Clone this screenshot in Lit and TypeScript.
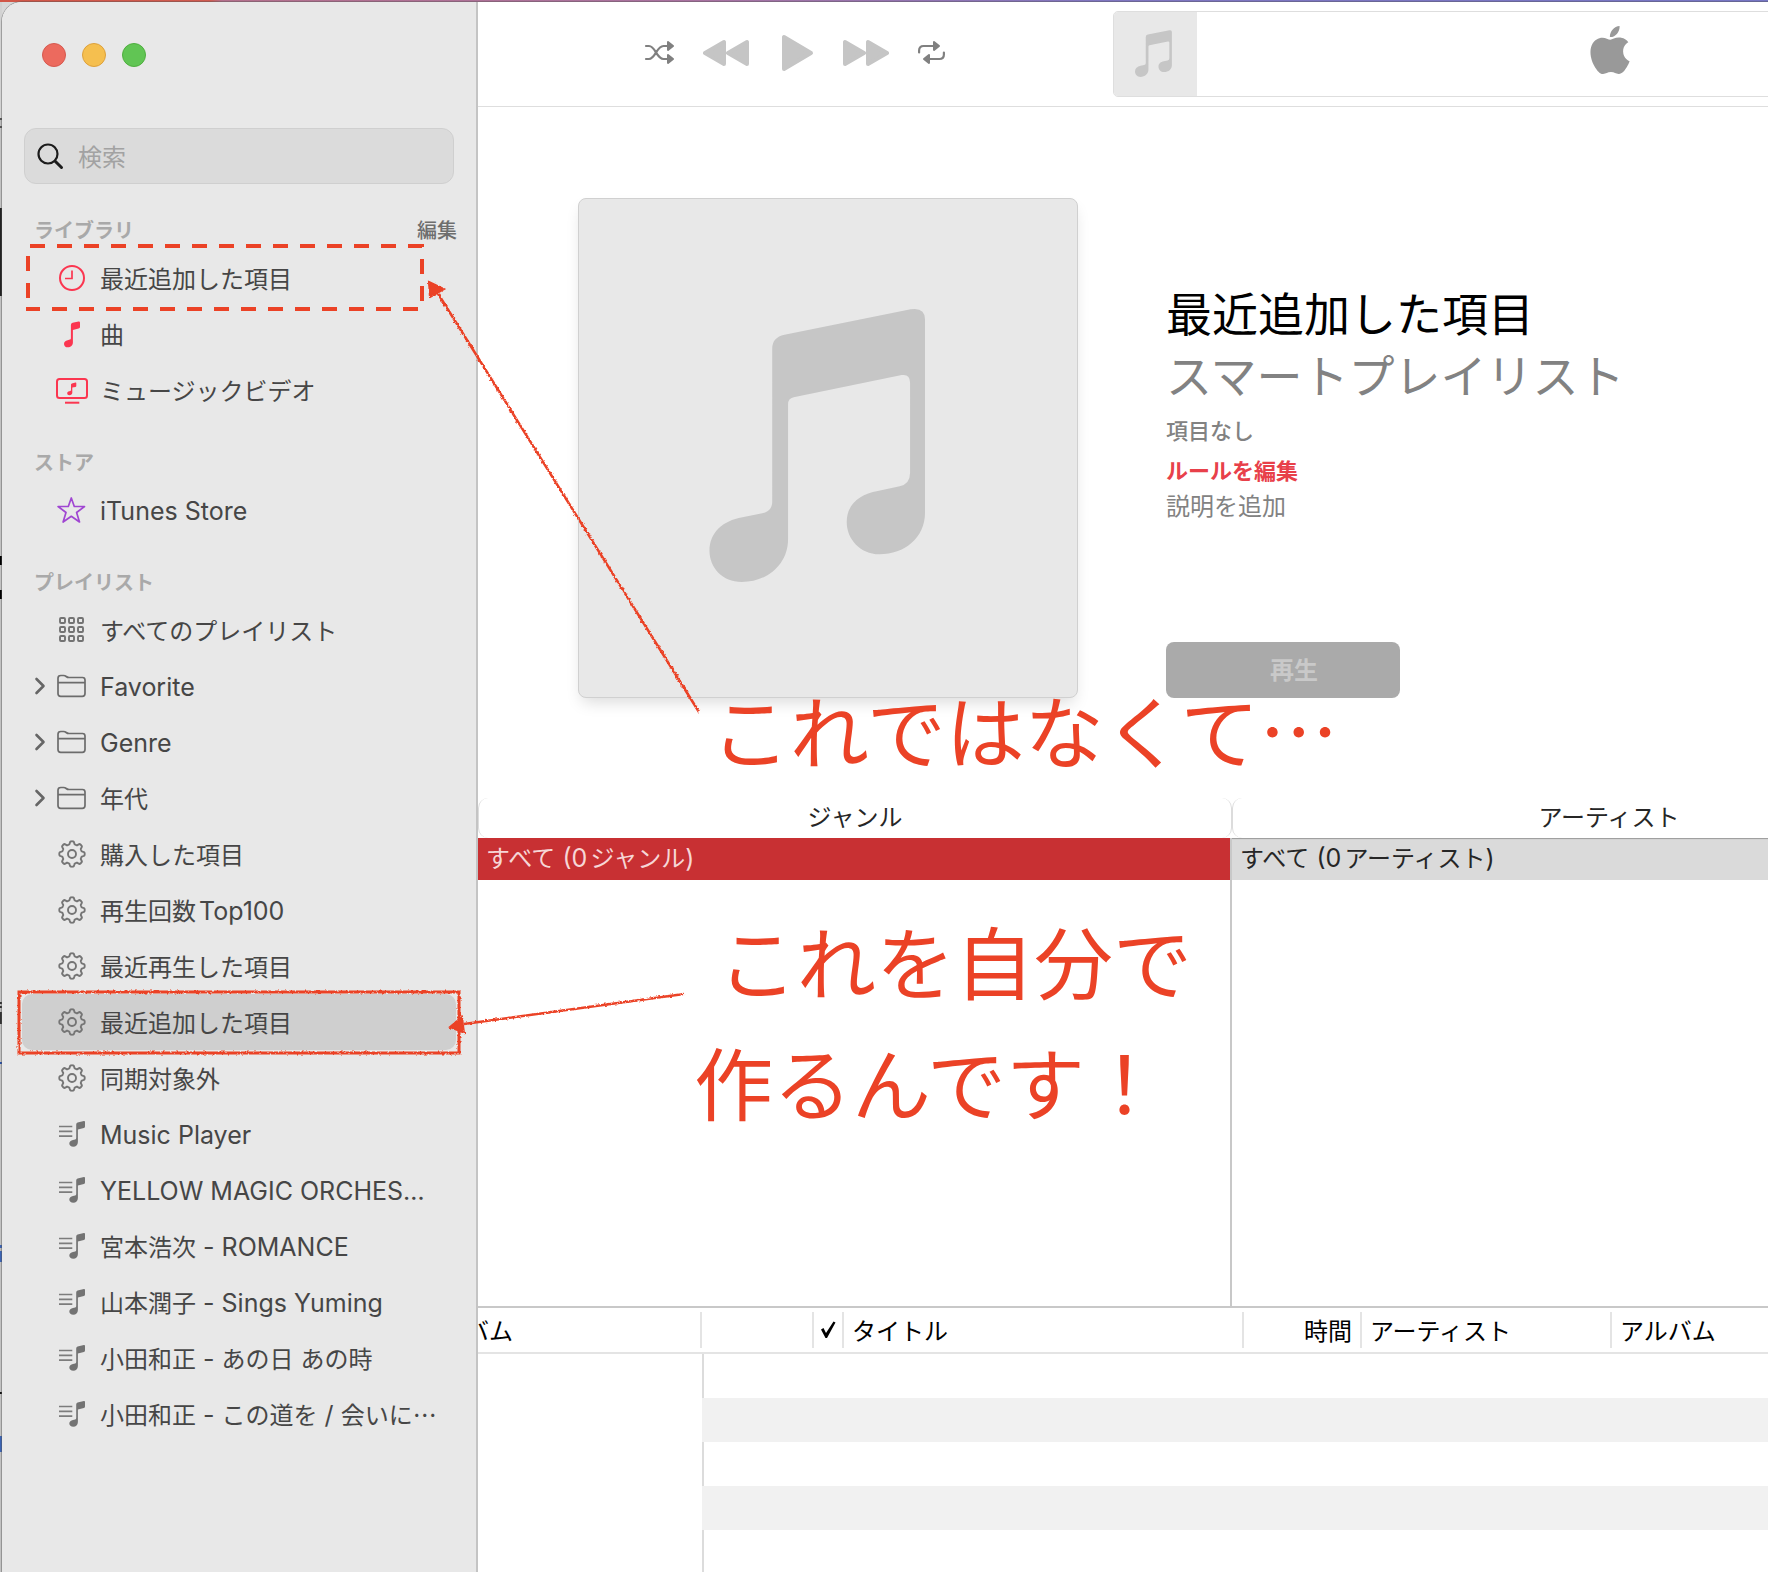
import { LitElement, html, css, svg, nothing } from "lit";
import { customElement, property, state } from "lit/decorators.js";
import { classMap } from "lit/directives/class-map.js";

type IconName = "clock" | "note" | "video" | "star" | "grid" | "folder" | "gear" | "playlist";

interface Item {
  id: string;
  label: string;
  icon: IconName;
  expandable?: boolean;
}

interface Section {
  title: string;
  editable?: boolean;
  items: Item[];
}

const SECTIONS: Section[] = [
  {
    title: "ライブラリ",
    editable: true,
    items: [
      { id: "recent", label: "最近追加した項目", icon: "clock" },
      { id: "songs", label: "曲", icon: "note" },
      { id: "videos", label: "ミュージックビデオ", icon: "video" },
    ],
  },
  { title: "ストア", items: [{ id: "store", label: "iTunes Store", icon: "star" }] },
  {
    title: "プレイリスト",
    items: [
      { id: "all", label: "すべてのプレイリスト", icon: "grid" },
      { id: "favorite", label: "Favorite", icon: "folder", expandable: true },
      { id: "genre", label: "Genre", icon: "folder", expandable: true },
      { id: "era", label: "年代", icon: "folder", expandable: true },
      { id: "purchased", label: "購入した項目", icon: "gear" },
      { id: "top100", label: "再生回数Top100", icon: "gear" },
      { id: "played", label: "最近再生した項目", icon: "gear" },
      { id: "smart-recent", label: "最近追加した項目", icon: "gear" },
      { id: "nosync", label: "同期対象外", icon: "gear" },
      { id: "player", label: "Music Player", icon: "playlist" },
      { id: "ymo", label: "YELLOW MAGIC ORCHES…", icon: "playlist" },
      { id: "romance", label: "宮本浩次 - ROMANCE", icon: "playlist" },
      { id: "yuming", label: "山本潤子 - Sings Yuming", icon: "playlist" },
      { id: "anohi", label: "小田和正 - あの日 あの時", icon: "playlist" },
      { id: "konomichi", label: "小田和正 - この道を / 会いに…", icon: "playlist" },
    ],
  },
];

/** Closed outline of a cog with eight soft teeth, centred in a 32px box. */
function gearOutline(): string {
  const steps = 128;
  const points: string[] = [];
  for (let i = 0; i < steps; i++) {
    const a = (i / steps) * Math.PI * 2;
    const r = 11.3 + 1.4 * Math.tanh(2.4 * Math.cos(8 * a));
    points.push(`${(16 + r * Math.sin(a)).toFixed(2)} ${(16 - r * Math.cos(a)).toFixed(2)}`);
  }
  return `M${points.join("L")}Z`;
}
const GEAR = gearOutline();

const NOTES_PATH =
  "M206.3 136.2L333 110.8Q347.4 108.5 347.4 121V315C347.4 340 327 356.7 301.6 356.7C282 356.7 268.8 341 268.8 324.5C268.8 306 282 296.500 299.900 293.100L322 288.400Q332.400 286 332.400 274.800V184.500Q332.400 175.500 324 176.800L215.500 199Q209.900 200.200 209.900 206V341.700C209.900 367 189 384.600 163.400 384.600C144 384.600 131 370 131 353.200C131 335 144 323 164.100 319.500L184 315.500Q194 313.500 194 304V150Q194 138.800 206.300 136.200Z";

const ICONS: Record<IconName, unknown> = {
  clock: svg`<circle cx="16" cy="16" r="12" fill="none" stroke="#fb3650" stroke-width="2"/>
    <path d="M16 8.500V16.500H9" fill="none" stroke="#fb3650" stroke-width="1.700"/>`,
  note: svg`<path d="M14.900 7Q14.900 5.200 16.600 4.800L22.500 3.500Q24 3.200 24 4.800V9Q24 10.300 22.600 10.600L16.900 11.900V24.500C16.900 27.500 14.600 29.300 11.900 29.300C9.600 29.300 8 27.900 8 25.900C8 23.900 9.500 22.700 11.600 22.200L13.900 21.600Q14.900 21.300 14.900 20.200Z" fill="#fb3650"/>`,
  video: svg`<rect x="1" y="5" width="30" height="19" rx="2.500" fill="none" stroke="#fb3650" stroke-width="2"/>
    <path d="M9 28.700H23.300" stroke="#fb3650" stroke-width="2"/>
    <path d="M15 10.500Q15 9.600 15.900 9.400L19.500 8.600Q20.300 8.400 20.300 9.200V12Q20.300 12.700 19.500 12.900L16.300 13.600V18.500C16.300 20.300 15 21.300 13.500 21.300C12 21.300 11.200 20.400 11.200 19.300C11.200 18.200 12 17.500 13.200 17.200L14.400 16.900Q15 16.700 15 16Z" fill="#fb3650"/>`,
  star: svg`<path d="M15.300 4L18.300 12.500H28.500L20.600 18.500L23.500 28L15.300 22.300L7.100 28L10 18.500L2.100 12.500H12.300Z" fill="none" stroke="#a046d2" stroke-width="1.700" stroke-linejoin="round"/>`,
  grid: svg`${[4, 13, 22].map((y) =>
    [4, 13, 22].map(
      (x) => svg`<rect x=${x} y=${y} width="5" height="5" rx="1" fill="none" stroke="#737373" stroke-width="1.900"/>`
    )
  )}`,
  folder: svg`<path d="M2 23.500V8.300Q2 5.500 4.800 5.500H7.500Q9 5.500 10.200 6.500Q11.400 7.500 13 7.500H26.500Q29 7.500 29 10V23.500Q29 26.300 26.300 26.300H4.700Q2 26.300 2 23.500ZM2 12.600H29" fill="none" stroke="#6c6c6c" stroke-width="1.700"/>`,
  gear: svg`<path d=${GEAR} fill="none" stroke="#757575" stroke-width="1.900"/>
    <circle cx="16" cy="16" r="4" fill="none" stroke="#757575" stroke-width="1.900"/>`,
  playlist: svg`<path d="M3 8.500H16.300M3 13.300H16.300M3 18.100H16.300" stroke="#7c7c7c" stroke-width="1.700"/>
    <path d="M20.200 6.500Q20.200 5 21.600 4.600L27.900 3.100Q29 2.900 29 4V8.400Q29 9.600 27.900 9.900L21.900 11.400V24C21.900 27 19.800 28.700 17.300 28.700C14.900 28.700 13.300 27.400 13.300 25.500C13.300 23.600 14.900 22.300 17 21.900L19.200 21.400Q20.200 21.100 20.200 20Z" fill="#737373"/>`,
};

const TYPE = css`
  :host {
    font-family: "Noto Sans CJK JP", "Liberation Sans", sans-serif;
    text-autospace: normal;
  }
  .latin {
    font-family: Inter, "Liberation Sans", sans-serif;
    font-size: 25px;
  }
  button {
    border: 0;
    padding: 0;
    background: none;
    font: inherit;
    color: inherit;
  }
  svg {
    display: block;
  }
`;

/** Latin runs are set in their own face beside the Japanese text. */
function mixed(text: string) {
  return text
    .split(/([ -~]+…?)/)
    .filter(Boolean)
    .map((part) => (/^[ -~]/.test(part) ? html`<span class="latin">${part}</span>` : part));
}

@customElement("music-sidebar")
class MusicSidebar extends LitElement {
  @property() selected = "";

  static styles = [
    TYPE,
    css`
      :host {
        display: block;
        box-sizing: border-box;
        border-right: 2px solid #c4c4c4;
        border-top-left-radius: 20px;
        background: #e8e8e8;
        color: #464646;
        overflow: hidden;
      }
      .lights {
        display: flex;
        gap: 16px;
        padding: 41px 40px 0;
      }
      .light {
        width: 24px;
        height: 24px;
        border-radius: 50%;
        box-sizing: border-box;
        border: 1px solid #d5594f;
        background: #ec6a5e;
      }
      .light.minimize {
        border-color: #dca03c;
        background: #f5bf4f;
      }
      .light.zoom {
        border-color: #4fae3f;
        background: #61c554;
      }
      .search {
        display: flex;
        align-items: center;
        gap: 14px;
        box-sizing: border-box;
        height: 56px;
        margin: 61px 22px 0;
        padding: 0 11px 1px;
        border: 1px solid #cfcfcf;
        border-radius: 12px;
        background: #dbdbdb;
      }
      .search input {
        flex: 1;
        min-width: 0;
        border: 0;
        padding: 0;
        outline: 0;
        background: none;
        font: inherit;
        font-size: 24px;
        color: #222;
      }
      .search input::placeholder {
        color: #a2a2a2;
        opacity: 1;
      }
      nav {
        padding-top: 2px;
      }
      .head {
        display: flex;
        align-items: center;
        justify-content: space-between;
        height: 40px;
        margin-top: 24px;
        padding: 0 19px 0 32px;
        font-size: 20px;
        line-height: 32px;
      }
      .head h2 {
        margin: 0;
        font-size: 20px;
        font-weight: 700;
        color: #a9a9a9;
      }
      .head button {
        font-weight: 500;
        color: #6e6e6e;
      }
      ul {
        margin: 0;
        padding: 0 20px;
        list-style: none;
      }
      .row {
        display: grid;
        grid-template-columns: 12px minmax(0, 1fr);
        gap: 10px;
        align-items: center;
        height: 56px;
        padding-left: 12px;
        border-radius: 10px;
      }
      .row.selected {
        background: #cfcfcf;
      }
      .link {
        grid-column: 2;
        display: flex;
        align-items: center;
        gap: 12px;
        color: inherit;
        text-decoration: none;
      }
      .link svg {
        flex: none;
      }
      .label {
        height: 32px;
        font-size: 24px;
        line-height: 32px;
        white-space: nowrap;
      }
      .label .latin {
        line-height: 24px;
      }
    `,
  ];

  private choose(event: Event, id: string) {
    event.preventDefault();
    this.dispatchEvent(new CustomEvent("choose", { detail: id }));
  }

  render() {
    return html`
      <div class="lights">
        <button class="light close" aria-label="閉じる"></button>
        <button class="light minimize" aria-label="しまう"></button>
        <button class="light zoom" aria-label="拡大"></button>
      </div>
      <label class="search">
        <svg width="28" height="28" viewBox="0 0 28 28" fill="none" stroke="#1c1c1c" stroke-linecap="round">
          <circle cx="12" cy="12" r="9.500" stroke-width="2.200" />
          <path d="M19.200 19.200L25.500 25.500" stroke-width="3" />
        </svg>
        <input type="search" placeholder="検索" aria-label="検索" />
      </label>
      <nav>
        ${SECTIONS.map(
          (section) => html`
            <div class="head">
              <h2>${section.title}</h2>
              ${section.editable ? html`<button>編集</button>` : nothing}
            </div>
            <ul>
              ${section.items.map(
                (item) => html`
                  <li class=${classMap({ row: true, selected: item.id === this.selected })}>
                    ${item.expandable
                      ? html`<button aria-label="開く">
                          <svg width="12" height="18" viewBox="0 0 12 18">
                            <path d="M2.500 2L9.500 9L2.500 16" fill="none" stroke="#666" stroke-width="2.600" stroke-linecap="round" stroke-linejoin="round" />
                          </svg>
                        </button>`
                      : nothing}
                    <a class="link" href="#${item.id}" @click=${(e: Event) => this.choose(e, item.id)}>
                      <svg width="32" height="32" viewBox="0 0 32 32">${ICONS[item.icon]}</svg>
                      <span class="label">${mixed(item.label)}</span>
                    </a>
                  </li>
                `
              )}
            </ul>
          `
        )}
      </nav>
    `;
  }
}

@customElement("player-toolbar")
class PlayerToolbar extends LitElement {
  static styles = [
    TYPE,
    css`
      :host {
        display: flex;
        align-items: center;
        height: 104px;
        border-bottom: 1px solid #dedede;
        overflow: hidden;
      }
      .transport {
        flex: none;
        display: flex;
        align-items: center;
        gap: 29px;
        padding: 0 168px 2px 166px;
      }
      .display {
        flex: 1 0 994px;
        display: flex;
        box-sizing: border-box;
        height: 86px;
        border: 1px solid #dedede;
        border-radius: 5px;
        overflow: hidden;
      }
      .cover {
        flex: none;
        width: 83px;
        background: #e8e8e8;
      }
      .cover svg {
        margin: 18px 0 0 21px;
      }
      .idle {
        flex: 1;
        display: flex;
        align-items: center;
        justify-content: center;
        padding: 0 83px 8px 0;
      }
    `,
  ];

  render() {
    return html`
      <div class="transport">
        <button aria-label="シャッフル">
          <svg width="30" height="26" viewBox="0 0 30 26" fill="none" stroke="#808080" stroke-width="2.200">
            <path d="M2 6H5C11.500 6 12.500 19 19.500 19H24M2 19H5C11.500 19 12.500 6 19.500 6H24" stroke-linecap="round" />
            <path d="M24 2L29 6L24 10ZM24 15L29 19L24 23Z" fill="#808080" stroke-width="2" stroke-linejoin="round" />
          </svg>
        </button>
        <button aria-label="前へ">
          <svg width="46" height="30" viewBox="0 0 46 30" fill="#c5c5c5" stroke="#c5c5c5" stroke-width="4" stroke-linejoin="round">
            <path d="M2 15L21 4V26ZM25 15L44 4V26Z" />
          </svg>
        </button>
        <button aria-label="再生">
          <svg width="36" height="38" viewBox="-2 0 36 38" fill="#c5c5c5" stroke="#c5c5c5" stroke-width="4" stroke-linejoin="round">
            <path d="M4 3V35L31 19Z" />
          </svg>
        </button>
        <button aria-label="次へ">
          <svg width="46" height="30" viewBox="0 0 46 30" fill="#c5c5c5" stroke="#c5c5c5" stroke-width="4" stroke-linejoin="round">
            <path d="M2 4V26L21 15ZM25 4V26L44 15Z" />
          </svg>
        </button>
        <button aria-label="リピート">
          <svg width="27" height="26" viewBox="0 0 27 26" fill="none" stroke="#808080" stroke-width="2.200">
            <path d="M1.100 12.500V10.500Q1.100 6 5.600 6H16M25.900 12.500V14.500Q25.900 19 21.400 19H11" stroke-linecap="round" />
            <path d="M16 2L21 6L16 10ZM11 15L6 19L11 23Z" fill="#808080" stroke-width="2" stroke-linejoin="round" />
          </svg>
        </button>
      </div>
      <div class="display">
        <div class="cover">
          <svg width="37" height="47" viewBox="131 110 217 275"><path d=${NOTES_PATH} fill="#c6c6c6" /></svg>
        </div>
        <div class="idle">
          <svg width="48" height="48" viewBox="0 0 24 24">
            <path
              fill="#999"
              d="M12.152 6.896c-.948 0-2.415-1.078-3.960-1.040-2.040.027-3.910 1.183-4.961 3.014-2.117 3.675-.546 9.103 1.519 12.090 1.013 1.454 2.208 3.090 3.792 3.039 1.520-.065 2.090-.987 3.935-.987 1.831 0 2.350.987 3.960.948 1.637-.026 2.676-1.480 3.676-2.948 1.156-1.688 1.636-3.325 1.662-3.415-.039-.013-3.182-1.221-3.220-4.857-.026-3.040 2.480-4.494 2.597-4.559-1.429-2.090-3.623-2.324-4.390-2.376-2-.156-3.675 1.090-4.610 1.090zM15.530 3.830c.843-1.012 1.400-2.427 1.245-3.830-1.207.052-2.662.805-3.532 1.818-.780.896-1.454 2.338-1.273 3.714 1.338.104 2.715-.688 3.559-1.701"
            />
          </svg>
        </div>
      </div>
    `;
  }
}

@customElement("playlist-hero")
class PlaylistHero extends LitElement {
  static styles = [
    TYPE,
    css`
      :host {
        display: flex;
        gap: 88px;
        padding: 91px 100px 100px;
        color: #828282;
      }
      .art {
        flex: none;
        box-sizing: border-box;
        width: 500px;
        height: 500px;
        border: 1px solid #d0d0d0;
        border-radius: 8px;
        background: #e8e8e8;
        box-shadow: 0 8px 16px -4px rgba(0, 0, 0, 0.15);
      }
      .info {
        display: flex;
        flex-direction: column;
        align-items: flex-start;
        padding-top: 82px;
        white-space: nowrap;
      }
      h1,
      p {
        margin: 0;
      }
      h1 {
        font-size: 46px;
        line-height: 62px;
        font-weight: 400;
        color: #000;
      }
      .kind {
        font-size: 46px;
        line-height: 62px;
      }
      .count {
        margin-top: 5px;
        font-size: 22px;
        line-height: 40px;
        font-weight: 500;
      }
      .rules {
        font-size: 22px;
        line-height: 40px;
        font-weight: 700;
        color: #e8404a;
      }
      .describe {
        font-size: 24px;
        line-height: 32px;
      }
      .play {
        width: 234px;
        height: 56px;
        margin-top: auto;
        padding: 0 0 2px 22px;
        border-radius: 8px;
        background: #aaa;
        color: #c9c9c9;
        font-size: 24px;
        font-weight: 700;
        line-height: 32px;
      }
    `,
  ];

  render() {
    return html`
      <svg class="art" viewBox="0 0 500 500" role="img" aria-label="アートワーク">
        <path d=${NOTES_PATH} fill="#c6c6c6" />
      </svg>
      <div class="info">
        <h1>最近追加した項目</h1>
        <p class="kind">スマートプレイリスト</p>
        <p class="count">項目なし</p>
        <button class="rules">ルールを編集</button>
        <button class="describe">説明を追加</button>
        <button class="play" disabled>再生</button>
      </div>
    `;
  }
}

@customElement("column-browser")
class ColumnBrowser extends LitElement {
  static styles = [
    TYPE,
    css`
      :host {
        display: grid;
        grid-template-columns: repeat(2, 754px);
        height: 508px;
        border-bottom: 2px solid #c8c8c8;
        overflow: hidden;
        font-size: 24px;
        color: #262626;
      }
      .column {
        display: flex;
        flex-direction: column;
      }
      .title {
        height: 36px;
        border: 1px solid #dcdcdc;
        border-width: 0 1px;
        border-radius: 10px;
        line-height: 36px;
        padding-bottom: 4px;
        text-align: center;
      }
      .list {
        flex: 1;
        border-right: 2px solid #c8c8c8;
      }
      .entry {
        display: block;
        box-sizing: border-box;
        width: 100%;
        height: 42px;
        padding: 0 8px 4px;
        line-height: 38px;
        text-align: left;
        background: #dadada;
        box-shadow: inset 0 2px 1px -1px #999;
      }
      .entry.active {
        background: #c83033;
        color: #f6d6d6;
        box-shadow: none;
      }
      .entry .latin {
        line-height: 24px;
      }
    `,
  ];

  render() {
    return html`
      <section class="column">
        <div class="title">ジャンル</div>
        <div class="list"><button class="entry active">${mixed("すべて (0ジャンル)")}</button></div>
      </section>
      <section class="column">
        <div class="title">アーティスト</div>
        <div class="list"><button class="entry">${mixed("すべて (0アーティスト)")}</button></div>
      </section>
    `;
  }
}

@customElement("track-table")
class TrackTable extends LitElement {
  static styles = [
    TYPE,
    css`
      :host {
        display: block;
        color: #000;
      }
      table {
        width: 100%;
        table-layout: fixed;
        border-collapse: separate;
        border-spacing: 0;
        font-size: 24px;
      }
      .c-album-art {
        width: 224px;
      }
      .c-number {
        width: 112px;
      }
      .c-check {
        width: 30px;
      }
      .c-title {
        width: 400px;
      }
      .c-time {
        width: 118px;
      }
      .c-artist {
        width: 250px;
      }
      th {
        box-sizing: border-box;
        height: 46px;
        padding: 0;
        border-bottom: 2px solid #e4e4e4;
        font-weight: 400;
      }
      .cell {
        display: flex;
        align-items: center;
        box-sizing: border-box;
        height: 36px;
        padding: 0 8px;
        border-right: 2px solid #e4e4e4;
        line-height: 36px;
        white-space: nowrap;
        overflow: hidden;
      }
      th:last-child .cell {
        border-right: 0;
      }
      .cell.scrolled {
        justify-content: flex-end;
        padding: 0 187px 0 0;
      }
      .cell.check {
        padding: 0;
        justify-content: center;
      }
      .cell.end {
        justify-content: flex-end;
      }
      td {
        box-sizing: border-box;
        height: 44px;
        padding: 0;
      }
      .stripe {
        border-left: 2px solid #dcdcdc;
      }
      tr:nth-child(even) .stripe {
        border-left-color: #f1f1f1;
        background: #f1f1f1;
      }
    `,
  ];

  render() {
    return html`
      <table>
        <colgroup>
          <col class="c-album-art" />
          <col class="c-number" />
          <col class="c-check" />
          <col class="c-title" />
          <col class="c-time" />
          <col class="c-artist" />
          <col />
        </colgroup>
        <thead>
          <tr>
            <th><div class="cell scrolled">アルバム</div></th>
            <th><div class="cell"></div></th>
            <th>
              <div class="cell check">
                <svg width="18" height="20" viewBox="0 0 18 20" role="img" aria-label="チェック">
                  <path d="M2 9.500L4.500 8L7 13L14.500 1.500L16.500 2.500L8 18H6.500Z" fill="#000" />
                </svg>
              </div>
            </th>
            <th><div class="cell">タイトル</div></th>
            <th><div class="cell end">時間</div></th>
            <th><div class="cell">アーティスト</div></th>
            <th><div class="cell">アルバム</div></th>
          </tr>
        </thead>
        <tbody>
          ${[0, 1, 2, 3, 4].map(() => html`<tr><td></td><td class="stripe" colspan="6"></td></tr>`)}
        </tbody>
      </table>
    `;
  }
}

@customElement("app-root")
class AppRoot extends LitElement {
  @state() private selected = "smart-recent";

  static styles = [
    TYPE,
    css`
      :host {
        display: block;
        position: relative;
        height: 100vh;
        overflow: hidden;
      }
      .desktop {
        box-sizing: border-box;
        height: 100%;
        padding: 2px 0 0 2px;
        background:
          linear-gradient(90deg, #d15647 0, #cf5b50 210px, #b4708c 222px, #a872a0 700px, #7f76c0 1100px, #7676c4 100%) 0 0 / 100% 2px no-repeat,
          linear-gradient(
              #d2d2d2 118px, #555 118px 120px, #bbb 120px 126px, #555 126px 128px, #c2c2c2 128px 208px, #222 208px 296px,
              #c2c2c2 296px 556px, #000 556px 565px, #c2c2c2 565px 590px, #000 590px 599px, #c2c2c2 599px 1002px,
              #333 1002px 1004px, #bbb 1004px 1006px, #333 1006px 1008px, #bbb 1008px 1012px, #333 1012px 1024px,
              #c2c2c2 1024px 1062px, #2850a8 1062px 1064px, #c2c2c2 1064px 1245px, #3c64b4 1245px 1248px, #bbb 1248px 1251px,
              #3c64b4 1251px 1262px, #c2c2c2 1262px 1392px, #111 1392px 1394px, #c2c2c2 1394px 1436px, #3c64b4 1436px 1452px,
              #c2c2c2 1452px
            )
            0 0 / 2px 100% no-repeat,
          #d8d8d8;
      }
      .window {
        display: grid;
        grid-template-columns: 476px minmax(0, 1fr);
        height: 100%;
        border-top-left-radius: 20px;
        background: #fff;
        box-shadow: 0 0 0 1px rgba(80, 80, 80, 0.4);
      }
      main {
        display: flex;
        flex-direction: column;
        min-width: 0;
        overflow: hidden;
      }
      main > * {
        flex: none;
      }
      .marks {
        position: absolute;
        left: 0;
        top: 0;
        pointer-events: none;
      }
      .callout {
        position: absolute;
        margin: 0;
        font-size: 79px;
        line-height: 80px;
        color: #eb4226;
        white-space: nowrap;
      }
      .not-this {
        left: 711px;
        top: 689px;
      }
      .make-this {
        left: 718px;
        top: 920px;
      }
      .yourself {
        left: 694px;
        top: 1041px;
      }
    `,
  ];

  render() {
    return html`
      <div class="desktop">
        <div class="window">
          <music-sidebar .selected=${this.selected} @choose=${(e: CustomEvent) => (this.selected = e.detail)}></music-sidebar>
          <main>
            <player-toolbar></player-toolbar>
            <playlist-hero></playlist-hero>
            <column-browser></column-browser>
            <track-table></track-table>
          </main>
        </div>
      </div>
      <svg class="marks" width="1100" height="1100" viewBox="0 0 1100 1100" fill="none" stroke="#eb4226">
        <filter id="chalk" filterUnits="userSpaceOnUse" x="0" y="0" width="1100" height="1100">
          <feTurbulence type="fractalNoise" baseFrequency="0.4" numOctaves="2" seed="4" />
          <feDisplacementMap in="SourceGraphic" scale="3" xChannelSelector="R" yChannelSelector="G" />
        </filter>
        <path d="M30 246H422V309H26M28 298V246" stroke-width="4" stroke-dasharray="15 12" />
        <g filter="url(#chalk)">
          <rect x="19" y="992" width="440" height="61" stroke-width="3" />
          <path d="M437 292L699 712M464 1024L684 994" stroke-width="2.500" />
          <path d="M429 282L444 289L430 297ZM450 1027L462 1017L464 1033Z" fill="#eb4226" stroke-width="2" />
        </g>
      </svg>
      <p class="callout not-this">これではなくて…</p>
      <p class="callout make-this">これを自分で</p>
      <p class="callout yourself">作るんです！</p>
    `;
  }
}
